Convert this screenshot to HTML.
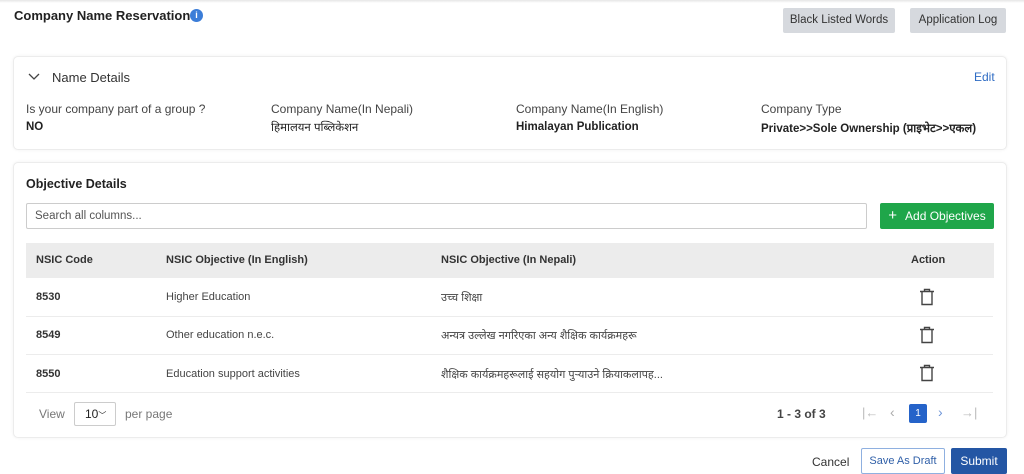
<!DOCTYPE html>
<html><head><meta charset="utf-8"><style>
*{box-sizing:border-box;margin:0;padding:0}
body{width:1024px;height:473px;overflow:hidden;background:#fff;font-family:"Liberation Sans","Noto Sans CJK SC",sans-serif;color:#222;position:relative;font-size:12px}
.a{position:absolute;white-space:nowrap}
.card{position:absolute;border:1px solid #ececec;border-radius:5px;box-shadow:0 0 3px rgba(0,0,0,.06);background:#fff}
.gbtn{position:absolute;background:#d6d9de;border-radius:2px;font-size:11.5px;color:#333;text-align:center;line-height:25px;height:25px}
.lbl{color:#444;font-size:12px}
.val{font-weight:bold;font-size:11.5px;color:#222}
.th{font-weight:bold;color:#333;font-size:11px}
.td{font-size:11px;color:#444}
.sep{position:absolute;left:26px;width:967px;height:1px;background:#ececec}
</style></head><body>
<div style="position:absolute;left:0;top:0;width:1024px;height:3px;background:linear-gradient(#e6e6e6,#fff)"></div>
<div class="a" style="left:14px;top:8px;font-size:13px;font-weight:bold;color:#222">Company Name Reservation</div>
<div class="a" style="left:190px;top:9px;width:13px;height:13px;border-radius:50%;background:#3b7dd8;color:#fff;font-size:9px;font-weight:bold;text-align:center;line-height:13px">i</div>
<div class="gbtn" style="left:783px;top:8px;width:112px">Black Listed Words</div>
<div class="gbtn" style="left:910px;top:8px;width:96px">Application Log</div>

<div class="card" style="left:13px;top:56px;width:994px;height:94px"></div>
<svg class="a" style="left:28px;top:72px" width="12" height="10"><path d="M1 2 L6 7 L11 2" fill="none" stroke="#444" stroke-width="1.3"/></svg>
<div class="a" style="left:52px;top:70px;font-size:13px;color:#333">Name Details</div>
<div class="a" style="left:974px;top:70px;color:#2f6cc4;font-size:12px">Edit</div>
<div class="a lbl" style="left:26px;top:102px">Is your company part of a group ?</div>
<div class="a val" style="left:26px;top:121px">NO</div>
<div class="a lbl" style="left:271px;top:102px">Company Name(In Nepali)</div>
<div class="a val" style="left:271px;top:120px;font-weight:normal">हिमालयन पब्लिकेशन</div>
<div class="a lbl" style="left:516px;top:102px">Company Name(In English)</div>
<div class="a val" style="left:516px;top:121px">Himalayan Publication</div>
<div class="a lbl" style="left:761px;top:102px">Company Type</div>
<div class="a val" style="left:761px;top:121px">Private&gt;&gt;Sole Ownership (प्राइभेट&gt;&gt;एकल)</div>

<div class="card" style="left:13px;top:162px;width:994px;height:276px"></div>
<div class="a" style="left:26px;top:177px;font-weight:bold;font-size:12.5px;color:#222">Objective Details</div>
<div class="a" style="left:26px;top:203px;width:841px;height:26px;border:1px solid #ccc;border-radius:2px;padding-left:8px;line-height:24px;color:#555;font-size:11.5px">Search all columns...</div>
<div class="a" style="left:880px;top:203px;width:114px;height:26px;background:#1fa64a;border-radius:2px;color:#fff;font-size:12px;line-height:26px;text-align:center"><span style="font-size:15px;margin-right:8px">+</span>Add Objectives</div>
<div class="a" style="left:26px;top:243px;width:968px;height:35px;background:#ececec"></div>
<div class="a th" style="left:36px;top:254px">NSIC Code</div>
<div class="a th" style="left:166px;top:254px">NSIC Objective (In English)</div>
<div class="a th" style="left:441px;top:254px">NSIC Objective (In Nepali)</div>
<div class="a th" style="left:911px;top:254px">Action</div>

<div class="a td" style="left:36px;top:291px;font-weight:bold;color:#333">8530</div>
<div class="a td" style="left:166px;top:291px">Higher Education</div>
<div class="a td" style="left:441px;top:290px">उच्च शिक्षा</div>
<div class="sep" style="top:316px"></div>
<div class="a td" style="left:36px;top:329px;font-weight:bold;color:#333">8549</div>
<div class="a td" style="left:166px;top:329px">Other education n.e.c.</div>
<div class="a td" style="left:441px;top:328px">अन्यत्र उल्लेख नगरिएका अन्य शैक्षिक कार्यक्रमहरू</div>
<div class="sep" style="top:354px"></div>
<div class="a td" style="left:36px;top:368px;font-weight:bold;color:#333">8550</div>
<div class="a td" style="left:166px;top:368px">Education support activities</div>
<div class="a td" style="left:441px;top:367px">शैक्षिक कार्यक्रमहरूलाई सहयोग पुर्‍याउने क्रियाकलापह...</div>
<div class="sep" style="top:392px"></div>

<svg class="a" style="left:919px;top:288px" width="16" height="18"><path d="M1 3.5H15M5.5 3.5V1.5H10.5V3.5M3 3.5V16.5H13V3.5" fill="none" stroke="#444" stroke-width="1.4"/></svg>
<svg class="a" style="left:919px;top:326px" width="16" height="18"><path d="M1 3.5H15M5.5 3.5V1.5H10.5V3.5M3 3.5V16.5H13V3.5" fill="none" stroke="#444" stroke-width="1.4"/></svg>
<svg class="a" style="left:919px;top:364px" width="16" height="18"><path d="M1 3.5H15M5.5 3.5V1.5H10.5V3.5M3 3.5V16.5H13V3.5" fill="none" stroke="#444" stroke-width="1.4"/></svg>

<div class="a" style="left:39px;top:407px;color:#777;font-size:12px">View</div>
<div class="a" style="left:74px;top:402px;width:42px;height:24px;border:1px solid #ccc;border-radius:2px;font-size:12px;line-height:22px;padding-left:10px">10<span style="font-size:8px">﹀</span></div>
<div class="a" style="left:125px;top:407px;color:#777;font-size:12px">per page</div>
<div class="a" style="left:777px;top:407px;font-weight:bold;color:#444;font-size:12px">1 - 3 of 3</div>
<div class="a" style="left:862px;top:405px;color:#bbb;font-size:13px">|←</div>
<div class="a" style="left:890px;top:404px;color:#aaa;font-size:14px">‹</div>
<div class="a" style="left:909px;top:404px;width:18px;height:19px;background:#2563c9;border-radius:2px;color:#fff;font-size:10px;text-align:center;line-height:19px">1</div>
<div class="a" style="left:938px;top:404px;color:#6e95d8;font-size:14px">›</div>
<div class="a" style="left:961px;top:405px;color:#bbb;font-size:13px">→|</div>

<div class="a" style="left:812px;top:455px;color:#333;font-size:12px">Cancel</div>
<div class="a" style="left:861px;top:448px;width:84px;height:26px;border:1px solid #8fb0e0;border-radius:2px;color:#2f5fa8;font-size:11px;text-align:center;line-height:25px">Save As Draft</div>
<div class="a" style="left:951px;top:448px;width:56px;height:26px;background:#2456a4;border-radius:2px;color:#fff;font-size:12px;text-align:center;line-height:26px">Submit</div>
</body></html>
